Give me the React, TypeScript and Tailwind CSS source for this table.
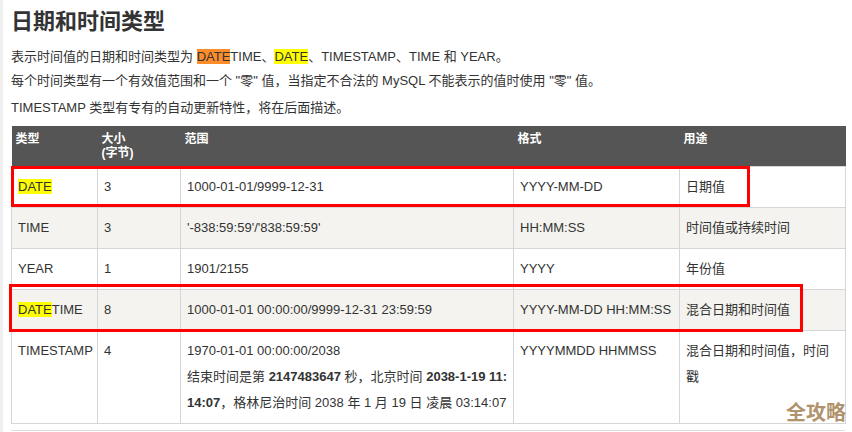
import React from 'react';

const font = '"Liberation Sans", "Noto Sans CJK SC", sans-serif';

interface Row {
  type: React.ReactNode;
  size: string;
  range: React.ReactNode;
  format: string;
  use: React.ReactNode;
  shaded?: boolean;
}

const hl = (t: string) => <span className="bg-[#ffff00]">{t}</span>;

const rows: Row[] = [
  {
    type: hl('DATE'),
    size: '3',
    range: '1000-01-01/9999-12-31',
    format: 'YYYY-MM-DD',
    use: '日期值',
  },
  {
    type: 'TIME',
    size: '3',
    range: "'-838:59:59'/'838:59:59'",
    format: 'HH:MM:SS',
    use: '时间值或持续时间',
    shaded: true,
  },
  {
    type: 'YEAR',
    size: '1',
    range: '1901/2155',
    format: 'YYYY',
    use: '年份值',
  },
  {
    type: (
      <>
        {hl('DATE')}TIME
      </>
    ),
    size: '8',
    range: '1000-01-01 00:00:00/9999-12-31 23:59:59',
    format: 'YYYY-MM-DD HH:MM:SS',
    use: '混合日期和时间值',
    shaded: true,
  },
  {
    type: 'TIMESTAMP',
    size: '4',
    range: (
      <>
        <span className="whitespace-nowrap">1970-01-01 00:00:00/2038</span>
        <br />
        <span className="whitespace-nowrap">
          结束时间是第 <b>2147483647</b> 秒，北京时间 <b>2038-1-19 11:</b>
        </span>
        <br />
        <span className="whitespace-nowrap">
          <b>14:07</b>，格林尼治时间 2038 年 1 月 19 日 凌晨 03:14:07
        </span>
      </>
    ),
    format: 'YYYYMMDD HHMMSS',
    use: (
      <>
        混合日期和时间值，时间
        <br />戳
      </>
    ),
  },
];

export default function App() {
  return (
    <div
      className="relative w-[852px] h-[432px] overflow-hidden bg-white border-l-[3px] border-[#efefef] pl-[8px] text-[#333333]"
      style={{ fontFamily: font }}
    >
      <h2 className="mt-[7px] text-[22px] leading-[30px] font-bold">日期和时间类型</h2>
      <p className="mt-[8px] text-[13px] leading-[24px]">
        表示时间值的日期和时间类型为 <span className="bg-[#fd8c2b]">DATE</span>TIME、
        <span className="bg-[#ffff00]">DATE</span>、TIMESTAMP、TIME 和 YEAR。
      </p>
      <p className="text-[13px] leading-[24px]">
        每个时间类型有一个有效值范围和一个 "零" 值，当指定不合法的 MySQL 不能表示的值时使用 "零" 值。
      </p>
      <p className="mt-[2px] text-[13px] leading-[26px]">
        TIMESTAMP 类型有专有的自动更新特性，将在后面描述。
      </p>

      <div className="relative mt-[5px] w-[834px]">
        <table className="w-full table-fixed border-collapse text-[13px]">
          <colgroup>
            <col className="w-[86px]" />
            <col className="w-[83px]" />
            <col className="w-[333px]" />
            <col className="w-[166px]" />
            <col className="w-[166px]" />
          </colgroup>
          <thead>
            <tr className="bg-[#555555] text-white text-[12px] leading-[14px] font-bold text-left align-top">
              <th className="h-[40px] px-[4px] py-[6px]">类型</th>
              <th className="px-[4px] py-[6px]">
                大小
                <br />
                (字节)
              </th>
              <th className="px-[4px] py-[6px]">范围</th>
              <th className="px-[4px] py-[6px]">格式</th>
              <th className="px-[4px] py-[6px]">用途</th>
            </tr>
          </thead>
          <tbody>
            {rows.map((r, i) => (
              <tr
                key={i}
                className={`align-top leading-[26px] ${r.shaded ? 'bg-[#f4f3ef]' : 'bg-white'}`}
              >
                <td className="border border-[#d6d6d6] px-[6px] py-[7px]">{r.type}</td>
                <td className="border border-[#d6d6d6] px-[6px] py-[7px]">{r.size}</td>
                <td className="border border-[#d6d6d6] px-[6px] py-[7px]">{r.range}</td>
                <td className="border border-[#d6d6d6] px-[6px] py-[7px] whitespace-nowrap">
                  {r.format}
                </td>
                <td className="border border-[#d6d6d6] px-[6px] py-[7px]">{r.use}</td>
              </tr>
            ))}
          </tbody>
        </table>

        <div className="absolute left-0 top-[40px] w-[739px] h-[41px] border-[3px] border-[#ff0000]" />
        <div className="absolute left-[-2px] top-[158px] w-[794px] h-[48px] border-[3px] border-[#ff0000]" />
      </div>

      <div className="mt-[6px] w-[834px] border-t border-[#dddddd]" />

      <div
        className="absolute right-[6px] top-[399px] text-[20px] leading-[26px] font-bold text-[#b0936c]"
        style={{ fontFamily: '"Noto Sans CJK SC", sans-serif' }}
      >
        全攻略
      </div>
    </div>
  );
}
